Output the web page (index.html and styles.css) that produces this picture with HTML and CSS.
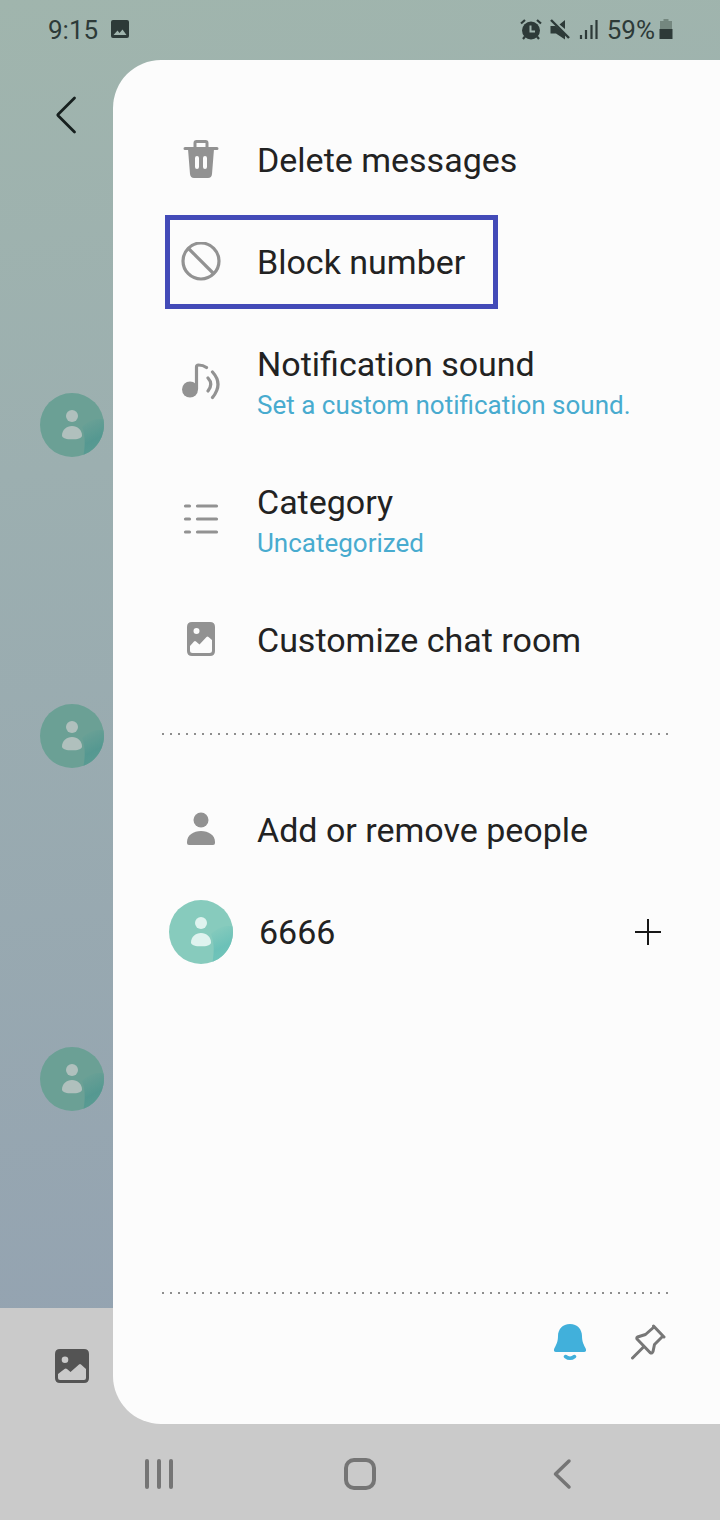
FILE: index.html
```html
<!DOCTYPE html>
<html lang="en">
<head>
<meta charset="utf-8">
<meta name="viewport" content="width=device-width, initial-scale=1">
<title>Messages</title>
<link rel="stylesheet" href="styles.css">
</head>
<body>
<svg class="defs" aria-hidden="true">
  <symbol id="avatar" viewBox="0 0 64 64">
    <circle cx="32" cy="32" r="32" fill="#87cbbd"/>
    <path d="M43.500 61.800C45.500 50 45 42 42 34C49 27 57 25 63.500 26.500A32 32 0 0 1 43.500 61.800Z" fill="url(#shade)"/>
    <circle cx="32" cy="23" r="6" fill="#dff3ef"/>
    <path d="M22 42.500C22 37 26.500 33 32 33S42 37 42 42.500C42 45.500 37 46.300 32 46.300S22 45.500 22 42.500Z" fill="#dff3ef"/>
  </symbol>
  <linearGradient id="shade" x1="0.300" y1="0" x2="0.600" y2="1">
    <stop offset="0" stop-color="#87cbbd"/>
    <stop offset="0.600" stop-color="#6cc1b8"/>
    <stop offset="1" stop-color="#72c5ba"/>
  </linearGradient>
</svg>
<div class="phone">
  <header class="status">
    <span class="status-group">
      <span>9:15</span>
      <svg width="20" height="20" viewBox="0 0 20 20"><path fill="#2d3a38" fill-rule="evenodd" d="M3 0H17Q19 0 19 2V16Q19 18 17 18H3Q1 18 1 16V2Q1 0 3 0ZM3.500 15H16.500L12.500 9.500L9.500 13L7.500 10.500Z"/></svg>
    </span>
    <span class="status-group status-right">
      <svg width="22" height="22" viewBox="0 0 22 22"><circle cx="11" cy="11.500" r="9" fill="#2d3a38"/><path d="M1 4.500L5 1M21 4.500L17 1M5 17.500L3 20M17 17.500L19 20" stroke="#2d3a38" stroke-width="2.200"/><path d="M10.500 6.500V12.500H15" fill="none" stroke="#9fb3ad" stroke-width="2"/></svg>
      <svg width="22" height="22" viewBox="0 0 22 22"><path d="M1.500 7H6.500L16 15.500V20.500L7 14.500H1.500ZM10.500 5.500L16 1V10Z" fill="#2d3a38"/><path d="M2 1L20 19" stroke="#2d3a38" stroke-width="2.400"/></svg>
      <svg width="22" height="22" viewBox="0 0 22 22"><path d="M3 16V20M8 11V20M13.500 6V20M18.500 1V20" stroke="#2d3a38" stroke-width="2.200"/></svg>
      <span class="battery"><span>59%</span>
      <svg width="14" height="22" viewBox="0 0 14 22"><path d="M4.500 0H9.500V2H13V10H1V2H4.500Z" fill="#74877f"/><path d="M0.500 10H13.500V20H0.500Z" fill="#2d3a38"/></svg></span>
    </span>
  </header>
  <main class="stage">
    <div class="chat">
      <button class="back" aria-label="Back"><svg width="24" height="40" viewBox="0 0 24 40"><path d="M20.500 3L4 19.500Q3.500 20 4 20.500L20.500 37" fill="none" stroke="#161f1e" stroke-width="2.800" stroke-linecap="round"/></svg></button>
      <div class="senders">
        <svg class="avatar sender"><use href="#avatar"/></svg>
        <svg class="avatar sender second"><use href="#avatar"/></svg>
        <svg class="avatar sender third"><use href="#avatar"/></svg>
      </div>
      <div class="composer">
        <button aria-label="Gallery"><svg width="34" height="34" viewBox="0 0 34 34"><path fill="#545454" fill-rule="evenodd" d="M5 0H29Q34 0 34 5V29Q34 34 29 34H5Q0 34 0 29V5Q0 0 5 0ZM3 25V29Q3 31 5 31H29Q31 31 31 29V20L26 15.500Q25 14.500 24 15.500L15.500 23L12 20Q10.800 18.800 9.500 20ZM10 7.500A3.300 3.300 0 1 0 10 14.100A3.300 3.300 0 1 0 10 7.500Z"/></svg></button>
      </div>
    </div>
    <aside class="drawer">
      <nav class="menu" aria-label="Conversation options">
        <button class="row">
          <span class="icon"><svg width="36" height="40" viewBox="0 0 36 40"><path d="M2 8.500H34M12 8.500V3Q12 1.500 13.500 1.500H22.500Q24 1.500 24 3V8.500" fill="none" stroke="#929292" stroke-width="3" stroke-linecap="round"/><path fill="#929292" fill-rule="evenodd" d="M5 9H31L29 34Q28.700 38 25 38H11Q7.500 38 7 34ZM14 16Q12 16 12 18V27Q12 29 14 29T16 27V18Q16 16 14 16ZM22 16Q20 16 20 18V27Q20 29 22 29T24 27V18Q24 16 22 16Z"/></svg></span>
          <span class="title">Delete messages</span>
        </button>
        <button class="row highlighted">
          <span class="icon"><svg width="40" height="40" viewBox="0 0 40 40"><g fill="none" stroke="#929292" stroke-width="3.200"><circle cx="20" cy="19" r="18"/><path d="M7.500 6.500L32.500 31.500"/></g></svg></span>
          <span class="title">Block number</span>
        </button>
        <button class="row tall">
          <span class="icon"><svg width="40" height="40" viewBox="0 0 40 40"><circle cx="9" cy="26.500" r="8" fill="#929292"/><g fill="none" stroke="#929292" stroke-width="3.200" stroke-linecap="round"><path d="M15.500 26V4Q15.500 2 17.500 2C21 2 23.500 3 25.500 4.500M27 15Q32.500 21 27 28M31.500 9Q42.500 21 31.500 34.500"/></g></svg></span>
          <span class="text"><span class="title">Notification sound</span><span class="note">Set a custom notification sound.</span></span>
        </button>
        <button class="row tall">
          <span class="icon"><svg width="36" height="36" viewBox="0 0 36 36"><path d="M2.500 3H6.500M14.500 3H33.500M2.500 16H6.500M14.500 16H33.500M2.500 29H6.500M14.500 29H33.500" stroke="#929292" stroke-width="3.200" stroke-linecap="round"/></svg></span>
          <span class="text"><span class="title">Category</span><span class="note">Uncategorized</span></span>
        </button>
        <button class="row">
          <span class="icon"><svg width="28" height="36" viewBox="0 0 28 36"><path fill="#929292" fill-rule="evenodd" d="M5 0H23Q28 0 28 5V29Q28 34 23 34H5Q0 34 0 29V5Q0 0 5 0ZM3 24V28.500Q3 31 5.500 31H22.500Q25 31 25 28.500V18L21.500 15Q20.500 14 19.500 15L12.500 22.500L9 19.500Q8 18.500 7 19.500ZM9.500 6A3 3 0 1 0 9.500 12A3 3 0 1 0 9.500 6Z"/></svg></span>
          <span class="title">Customize chat room</span>
        </button>
      </nav>
      <div class="divider"></div>
      <section class="people">
        <button class="row">
          <span class="icon"><svg width="28" height="36" viewBox="0 0 28 36"><circle cx="14" cy="8" r="7.500" fill="#929292"/><path d="M0 30C0 23 6.500 19 14 19S28 23 28 30V31Q28 33 26 33H2Q0 33 0 31Z" fill="#929292"/></svg></span>
          <span class="title">Add or remove people</span>
        </button>
        <div class="row member">
          <svg class="avatar"><use href="#avatar"/></svg>
          <span class="title name">6666</span>
          <button aria-label="Add contact"><svg width="26" height="26" viewBox="0 0 26 26"><path d="M13 0V26M0 13H26" stroke="#171717" stroke-width="2"/></svg></button>
        </div>
      </section>
      <footer class="foot">
        <div class="divider"></div>
        <div class="actions">
          <button aria-label="Mute notifications"><svg width="36" height="40" viewBox="0 0 36 40"><path d="M18 2C10.500 2 6 7.500 6 14C6 20 4 23 2.300 26.500C1.500 28.500 2 30 4 30H32C34 30 34.500 28.500 33.700 26.500C32 23 30 20 30 14C30 7.500 25.500 2 18 2Z" fill="#41b0db"/><path d="M13.500 34.500Q18 38 22.500 34.500" fill="none" stroke="#41b0db" stroke-width="3.500" stroke-linecap="round"/></svg></button>
          <button aria-label="Pin conversation"><svg width="36" height="40" viewBox="0 0 36 40"><path d="M2.500 36L14 24.500M23.500 4L34 15M24 5L15.500 12.500L7.500 15Q6 16 7.500 17.500L20 30.500Q22 32 23 29.500L24.500 22.500L33 14" fill="none" stroke="#777" stroke-width="3" stroke-linecap="round" stroke-linejoin="round"/></svg></button>
        </div>
      </footer>
    </aside>
  </main>
  <nav class="system" aria-label="System navigation">
    <button aria-label="Recent apps"><svg width="34" height="34" viewBox="0 0 34 34"><path d="M5 4V30M17 4V30M29 4V30" stroke="#757575" stroke-width="4" stroke-linecap="round"/></svg></button>
    <button aria-label="Home"><svg width="34" height="34" viewBox="0 0 34 34"><rect x="3" y="3" width="28" height="28" rx="8" fill="none" stroke="#757575" stroke-width="4"/></svg></button>
    <button aria-label="Back"><svg width="34" height="34" viewBox="0 0 34 34"><path d="M25 4L11.500 17L25 30" fill="none" stroke="#757575" stroke-width="3.500" stroke-linecap="round" stroke-linejoin="round"/></svg></button>
  </nav>
</div>
</body>
</html>
```
FILE: styles.css
```css
* { box-sizing: border-box; }
body { margin: 0; font-family: Roboto, sans-serif; color: #222; }
button { margin: 0; padding: 0; border: 0; background: none; font: inherit; color: inherit; text-align: left; }
svg { display: block; flex: none; }
.defs { position: absolute; width: 0; height: 0; }

.phone {
  display: flex;
  flex-direction: column;
  min-height: 100vh;
  background: linear-gradient(175deg, #a0b5ad 0%, #9cafb0 30%, #94a3b1 86%);
}
.status {
  display: flex;
  justify-content: space-between;
  height: 60px;
  padding: 0 47px 0 48px;
  font-size: 26px;
  color: #2d3a38;
}
.status-group { display: flex; align-items: center; gap: 12px; }
.status-right { gap: 7px; }
.battery { display: flex; align-items: center; gap: 4px; }

.stage { display: grid; flex: 1; }
.chat { grid-area: 1 / 1; display: flex; flex-direction: column; }
.back { align-self: flex-start; margin: 35px 0 0 54px; }
.senders { display: flex; flex: 1; flex-direction: column; padding: 258px 0 0 40px; }
.avatar { width: 64px; height: 64px; }
.sender { filter: brightness(0.790); }
.second { margin-top: 247px; }
.third { margin-top: 279px; }
.composer { display: flex; align-items: center; height: 116px; padding-left: 55px; background: #cacaca; }

.drawer {
  grid-area: 1 / 1;
  display: flex;
  flex-direction: column;
  margin-left: 113px;
  padding-top: 49px;
  border-radius: 48px 0 0 48px;
  background: #fcfcfc;
}
.row {
  display: flex;
  align-items: center;
  gap: 24px;
  min-height: 102px;
  margin-left: 56px;
}
.tall { min-height: 138px; padding-top: 2px; }
.icon { display: flex; justify-content: center; width: 64px; }
.text { display: flex; flex-direction: column; }
.title { font-size: 34px; line-height: 44px; }
.note { font-size: 26px; line-height: 38px; color: #48abcf; }
.highlighted { position: relative; width: fit-content; }
.highlighted::after {
  content: "";
  position: absolute;
  inset: 4px -33px 4px -4px;
  border: 5px solid #434bb8;
}
.divider {
  height: 2px;
  margin: 42px 50px 44px 49px;
  background: repeating-linear-gradient(90deg, #8e8e8e 0 2px, transparent 2px 8px);
}
.member { gap: 26px; padding-right: 59px; }
.name { flex: 1; }
.foot { margin-top: auto; }
.foot .divider { margin-top: 0; margin-bottom: 28px; }
.actions { display: flex; justify-content: flex-end; gap: 42px; padding: 0 54px 62px 0; }

.system {
  display: flex;
  align-items: center;
  justify-content: space-around;
  height: 96px;
  padding: 4px 58px 0 58px;
  background: #cacaca;
}
```
